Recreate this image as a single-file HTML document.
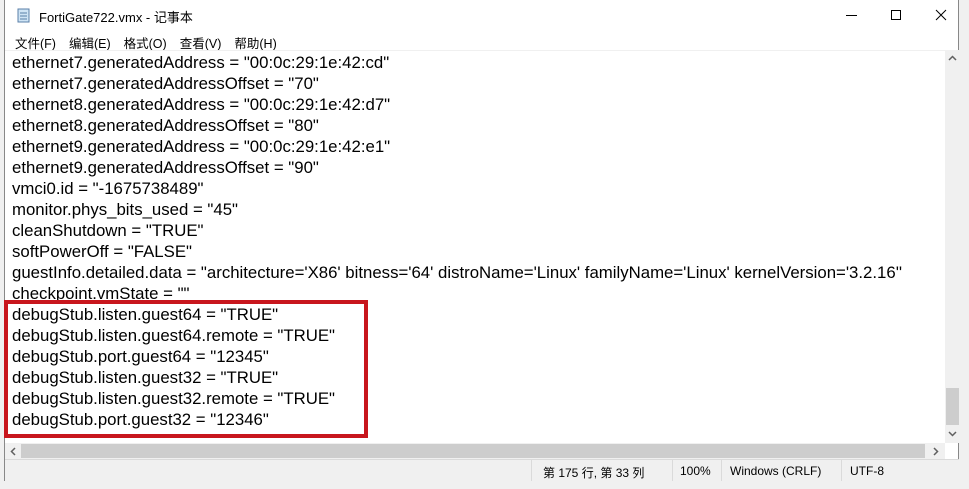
<!DOCTYPE html>
<html><head><meta charset="utf-8"><style>
body{margin:0;width:969px;height:489px;background:#f0f0f0;position:relative;overflow:hidden;font-family:"Liberation Sans","Noto Sans CJK SC",sans-serif}
.win{position:absolute;left:4px;top:0;width:955px;height:481px;background:#fff;border:1px solid #888;border-top:none;box-sizing:border-box}
.title{position:absolute;left:0;top:0;width:100%;height:30px;font-size:13px}
.title span{position:absolute;left:34px;top:7px;color:#000}
.menu{position:absolute;top:33px;left:10px;font-size:12.5px}
.menu span{margin-right:13px}
.edit{position:absolute;left:0;top:50px;width:940px;height:393px;border-top:1px solid #f0f0f0;overflow:hidden}
.edit pre{margin:0;position:absolute;left:7px;top:1px;font-family:"Liberation Sans",sans-serif;font-size:16.8px;line-height:21px;color:#000;white-space:pre}
.vs{position:absolute;left:940px;top:50px;width:14px;height:393px;background:#f0f0f0}
.hs{position:absolute;left:0;top:443px;width:940px;height:16px;background:#f0f0f0}
.status{position:absolute;left:0;top:459px;width:954px;height:21px;background:#f0f0f0;border-top:1px solid #dadada;font-size:12px}
.status div{position:absolute;top:4px}
.status .sep{top:0;width:1px;height:21px;background:#dadada}
.red{position:absolute;left:4px;top:300px;width:364px;height:138px;border:4px solid #c8161d;box-sizing:border-box}
</style></head><body>
<div class="win">
<div class="title">
<svg style="position:absolute;left:12px;top:7px" width="14" height="16"><rect x="1" y="2" width="11" height="13" fill="#cfe4f5" stroke="#5a7fa8"/><line x1="3" y1="6" x2="10" y2="6" stroke="#5a7fa8"/><line x1="3" y1="9" x2="10" y2="9" stroke="#5a7fa8"/><line x1="3" y1="12" x2="10" y2="12" stroke="#5a7fa8"/></svg>
<span>FortiGate722.vmx - 记事本</span>
<svg style="position:absolute;left:838px;top:8px" width="120" height="16"><line x1="3" y1="7.5" x2="14" y2="7.5" stroke="#000"/><rect x="48.5" y="2.5" width="9" height="9" fill="none" stroke="#000"/><path d="M93 2 L103 12 M103 2 L93 12" stroke="#000"/></svg>
</div>
<div class="menu"><span>文件(F)</span><span>编辑(E)</span><span>格式(O)</span><span>查看(V)</span><span>帮助(H)</span></div>
<div class="edit"><pre>ethernet7.generatedAddress = "00:0c:29:1e:42:cd"
ethernet7.generatedAddressOffset = "70"
ethernet8.generatedAddress = "00:0c:29:1e:42:d7"
ethernet8.generatedAddressOffset = "80"
ethernet9.generatedAddress = "00:0c:29:1e:42:e1"
ethernet9.generatedAddressOffset = "90"
vmci0.id = "-1675738489"
monitor.phys_bits_used = "45"
cleanShutdown = "TRUE"
softPowerOff = "FALSE"
guestInfo.detailed.data = "architecture='X86' bitness='64' distroName='Linux' familyName='Linux' kernelVersion='3.2.16''
checkpoint.vmState = ""
debugStub.listen.guest64 = "TRUE"
debugStub.listen.guest64.remote = "TRUE"
debugStub.port.guest64 = "12345"
debugStub.listen.guest32 = "TRUE"
debugStub.listen.guest32.remote = "TRUE"
debugStub.port.guest32 = "12346"</pre></div>
<div class="vs"><div style="position:absolute;left:1px;top:338px;width:13px;height:37px;background:#cdcdcd"></div>
<svg style="position:absolute;left:3px;top:5px" width="9" height="6"><path d="M1 5 L4.5 1.5 L8 5" stroke="#606060" stroke-width="1.5" fill="none"/></svg>
<svg style="position:absolute;left:3px;top:381px" width="9" height="6"><path d="M1 1 L4.5 4.5 L8 1" stroke="#606060" stroke-width="1.5" fill="none"/></svg></div>
<div class="hs"><div style="position:absolute;left:16px;top:1px;width:904px;height:14px;background:#cdcdcd"></div>
<svg style="position:absolute;left:5px;top:4px" width="6" height="9"><path d="M5 1 L1.5 4.5 L5 8" stroke="#606060" stroke-width="1.5" fill="none"/></svg>
<svg style="position:absolute;left:928px;top:4px" width="6" height="9"><path d="M1 1 L4.5 4.5 L1 8" stroke="#606060" stroke-width="1.5" fill="none"/></svg></div>
<div class="status">
<div class="sep" style="left:526px"></div>
<div style="left:538px">第 175 行, 第 33 列</div>
<div class="sep" style="left:667px"></div>
<div style="left:675px">100%</div>
<div class="sep" style="left:716px"></div>
<div style="left:725px">Windows (CRLF)</div>
<div class="sep" style="left:836px"></div>
<div style="left:845px">UTF-8</div>
</div>
</div>
<div class="red"></div>
</body></html>
